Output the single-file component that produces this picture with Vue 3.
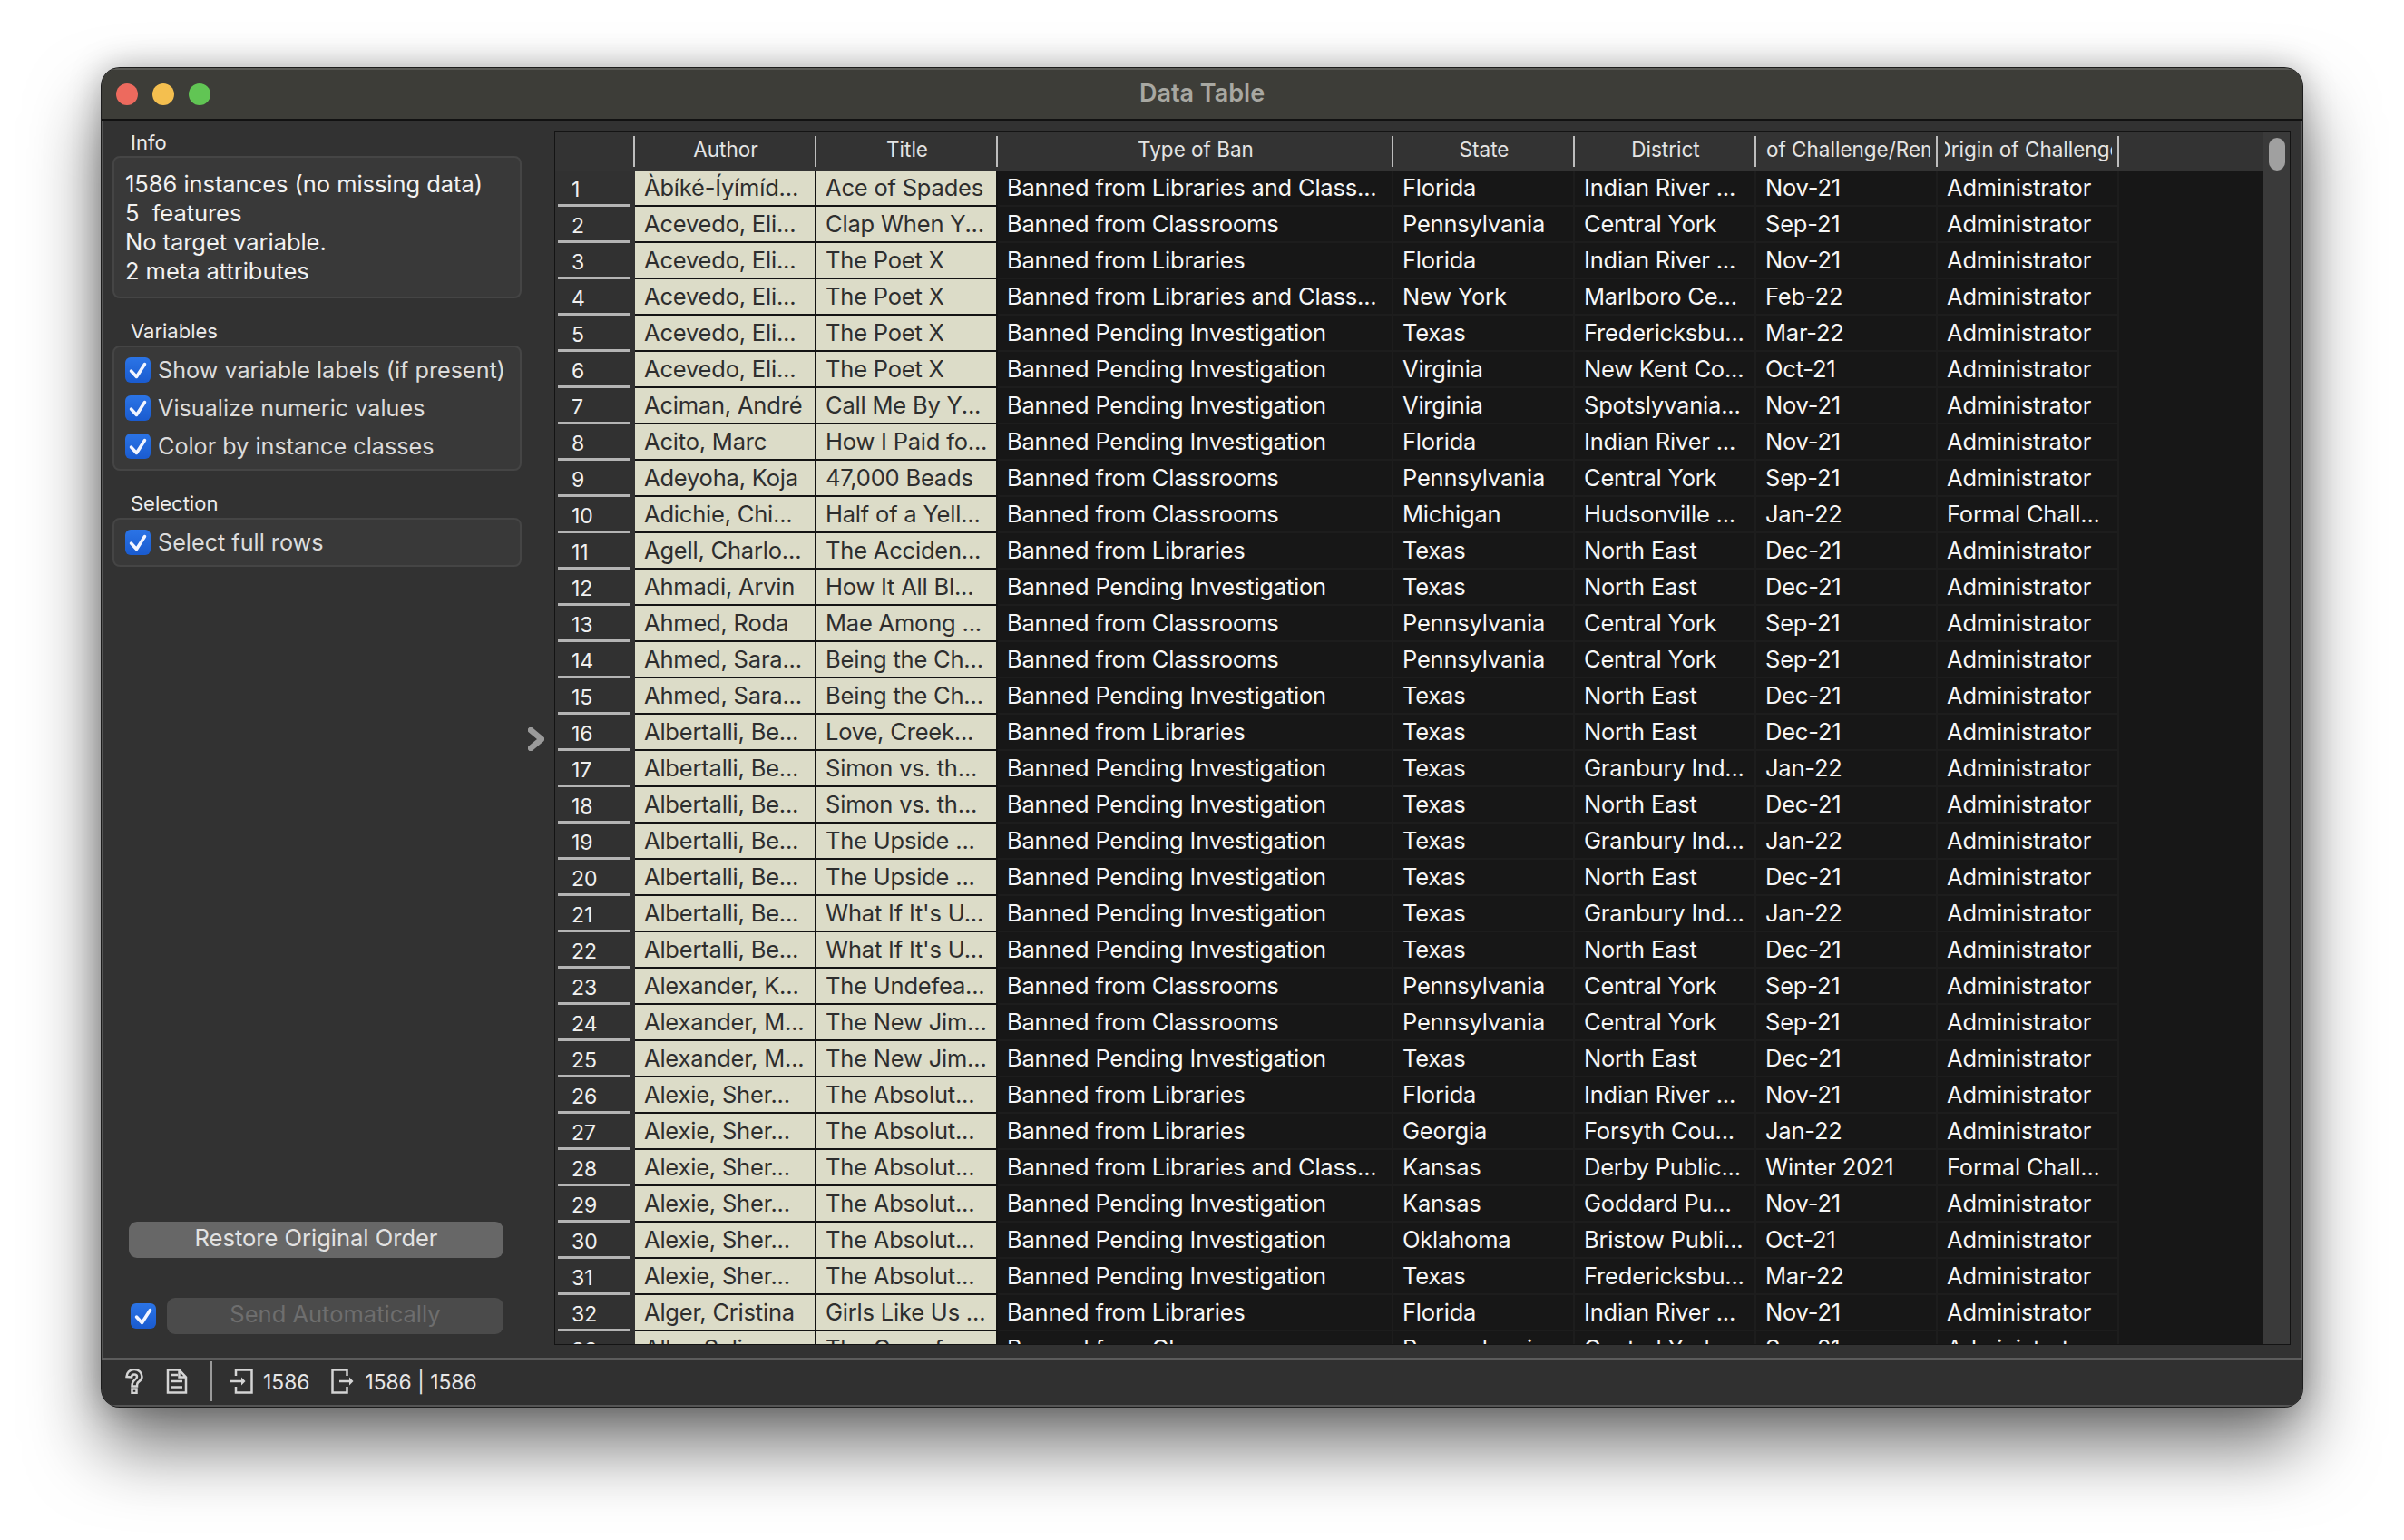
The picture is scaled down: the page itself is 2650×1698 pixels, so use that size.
<script setup>
const L = 'Banned from Libraries'
const LC = 'Banned from Libraries and Class...'
const C = 'Banned from Classrooms'
const P = 'Banned Pending Investigation'
const A = 'Administrator'
const F = 'Formal Chall...'

const columns = ['Author', 'Title', 'Type of Ban', 'State', 'District', 'Date of Challenge/Removal', 'Origin of Challenge']

const rows = [
  ['Àbíké-Íyímíd...', 'Ace of Spades', LC, 'Florida', 'Indian River ...', 'Nov-21', A],
  ['Acevedo, Eli...', 'Clap When Y...', C, 'Pennsylvania', 'Central York', 'Sep-21', A],
  ['Acevedo, Eli...', 'The Poet X', L, 'Florida', 'Indian River ...', 'Nov-21', A],
  ['Acevedo, Eli...', 'The Poet X', LC, 'New York', 'Marlboro Ce...', 'Feb-22', A],
  ['Acevedo, Eli...', 'The Poet X', P, 'Texas', 'Fredericksbu...', 'Mar-22', A],
  ['Acevedo, Eli...', 'The Poet X', P, 'Virginia', 'New Kent Co...', 'Oct-21', A],
  ['Aciman, André', 'Call Me By Y...', P, 'Virginia', 'Spotslyvania...', 'Nov-21', A],
  ['Acito, Marc', 'How I Paid fo...', P, 'Florida', 'Indian River ...', 'Nov-21', A],
  ['Adeyoha, Koja', '47,000 Beads', C, 'Pennsylvania', 'Central York', 'Sep-21', A],
  ['Adichie, Chi...', 'Half of a Yell...', C, 'Michigan', 'Hudsonville ...', 'Jan-22', F],
  ['Agell, Charlo...', 'The Acciden...', L, 'Texas', 'North East', 'Dec-21', A],
  ['Ahmadi, Arvin', 'How It All Bl...', P, 'Texas', 'North East', 'Dec-21', A],
  ['Ahmed, Roda', 'Mae Among ...', C, 'Pennsylvania', 'Central York', 'Sep-21', A],
  ['Ahmed, Sara...', 'Being the Ch...', C, 'Pennsylvania', 'Central York', 'Sep-21', A],
  ['Ahmed, Sara...', 'Being the Ch...', P, 'Texas', 'North East', 'Dec-21', A],
  ['Albertalli, Be...', 'Love, Creek...', L, 'Texas', 'North East', 'Dec-21', A],
  ['Albertalli, Be...', 'Simon vs. th...', P, 'Texas', 'Granbury Ind...', 'Jan-22', A],
  ['Albertalli, Be...', 'Simon vs. th...', P, 'Texas', 'North East', 'Dec-21', A],
  ['Albertalli, Be...', 'The Upside ...', P, 'Texas', 'Granbury Ind...', 'Jan-22', A],
  ['Albertalli, Be...', 'The Upside ...', P, 'Texas', 'North East', 'Dec-21', A],
  ['Albertalli, Be...', "What If It's U...", P, 'Texas', 'Granbury Ind...', 'Jan-22', A],
  ['Albertalli, Be...', "What If It's U...", P, 'Texas', 'North East', 'Dec-21', A],
  ['Alexander, K...', 'The Undefea...', C, 'Pennsylvania', 'Central York', 'Sep-21', A],
  ['Alexander, M...', 'The New Jim...', C, 'Pennsylvania', 'Central York', 'Sep-21', A],
  ['Alexander, M...', 'The New Jim...', P, 'Texas', 'North East', 'Dec-21', A],
  ['Alexie, Sher...', 'The Absolut...', L, 'Florida', 'Indian River ...', 'Nov-21', A],
  ['Alexie, Sher...', 'The Absolut...', L, 'Georgia', 'Forsyth Cou...', 'Jan-22', A],
  ['Alexie, Sher...', 'The Absolut...', LC, 'Kansas', 'Derby Public...', 'Winter 2021', F],
  ['Alexie, Sher...', 'The Absolut...', P, 'Kansas', 'Goddard Pu...', 'Nov-21', A],
  ['Alexie, Sher...', 'The Absolut...', P, 'Oklahoma', 'Bristow Publi...', 'Oct-21', A],
  ['Alexie, Sher...', 'The Absolut...', P, 'Texas', 'Fredericksbu...', 'Mar-22', A],
  ['Alger, Cristina', 'Girls Like Us ...', L, 'Florida', 'Indian River ...', 'Nov-21', A],
  ['Alko, Selina', 'The Case for...', C, 'Pennsylvania', 'Central York', 'Sep-21', A]
]

const variableOptions = ['Show variable labels (if present)', 'Visualize numeric values', 'Color by instance classes']
</script>

<template>
  <div class="page">
    <div class="window">
      <div class="titlebar">
        <span class="light red"></span>
        <span class="light yellow"></span>
        <span class="light green"></span>
        <span class="title">Data Table</span>
      </div>

      <div class="content">
        <aside class="sidebar">
          <div class="group-label">Info</div>
          <div class="box info">
            <div>1586 instances (no missing data)</div>
            <div>5&nbsp; features</div>
            <div>No target variable.</div>
            <div>2 meta attributes</div>
          </div>

          <div class="group-label spaced">Variables</div>
          <div class="box options">
            <label class="option" v-for="o in variableOptions" :key="o">
              <span class="check">
                <svg viewBox="0 0 28 28"><path d="M6.500 15l6 6.500L21.500 7.500" /></svg>
              </span>
              {{ o }}
            </label>
          </div>

          <div class="group-label spaced">Selection</div>
          <div class="box options">
            <label class="option">
              <span class="check">
                <svg viewBox="0 0 28 28"><path d="M6.500 15l6 6.500L21.500 7.500" /></svg>
              </span>
              Select full rows
            </label>
          </div>

          <div class="actions">
            <button class="btn" type="button">Restore Original Order</button>
            <div class="send-row">
              <span class="check">
                <svg viewBox="0 0 28 28"><path d="M6.500 15l6 6.500L21.500 7.500" /></svg>
              </span>
              <button class="btn disabled" type="button">Send Automatically</button>
            </div>
          </div>
        </aside>

        <div class="handle">
          <svg width="18" height="26" viewBox="0 0 18 26"><path d="M3 3l12 10L3 23" /></svg>
        </div>

        <div class="table">
          <div class="table-main">
            <div class="row head">
              <div class="corner"></div>
              <div class="head-cell" v-for="c in columns" :key="c">
                <div class="head-clip"><span>{{ c }}</span></div>
              </div>
            </div>
            <div class="body">
              <div class="row" v-for="(r, i) in rows" :key="i">
                <div class="num"><span>{{ i + 1 }}</span></div>
                <div
                  class="cell"
                  :class="{ meta: j < 2 }"
                  v-for="(v, j) in r"
                  :key="j"
                >{{ v }}</div>
              </div>
            </div>
          </div>
          <div class="scrollbar"><div class="thumb"></div></div>
        </div>
      </div>

      <div class="statusbar">
        <svg class="icon" width="20" height="28" viewBox="0 0 20 28">
          <path d="M1.500 9C1.500 4.500 5 1 10 1s8.500 3.500 8.500 8c0 3.500-3 5-4.500 6.500-.8.8-1 2-1 4H7.500c0-3.500.8-5.500 3-7 1.500-1 2.500-2 2.500-3.500S12 6.500 10 6.500 7 7.500 7 9.500z" />
          <rect x="7.500" y="22.500" width="5" height="4.500" />
        </svg>
        <svg class="icon doc" width="24" height="28" viewBox="0 0 24 28">
          <path d="M2 1.500h12.500l7.500 8v17H2zM14.500 1.500v8H22M6 7h7M6 14h12M6 20.500h12" />
        </svg>
        <span class="sep"></span>
        <svg class="icon" width="26" height="28" viewBox="0 0 26 28">
          <path d="M7 8V1.500h17.500v25H7V20M0 14h14" />
          <path class="solid" d="M13 9.500l4.500 4.500-4.500 4.500z" />
        </svg>
        <span class="count first">1586</span>
        <svg class="icon out" width="26" height="28" viewBox="0 0 26 28">
          <path d="M17.500 8V1.500H1.500v25h16V20M9 14h12" />
          <path class="solid" d="M20 9.500l4.500 4.500-4.500 4.500z" />
        </svg>
        <span class="count">1586 | 1586</span>
      </div>
    </div>
  </div>
</template>

<style scoped>
.page {
  width: 2650px;
  height: 1698px;
  padding: 75px 0 0 112px;
  box-sizing: border-box;
  overflow: hidden;
  background: #fff;
  font-family: Inter, "Liberation Sans", sans-serif;
  font-size: 26px;
}
.window {
  width: 2426px;
  height: 1476px;
  display: flex;
  flex-direction: column;
  background: #323232;
  border-radius: 20px;
  box-shadow: 0 0 0 1px #1c1c1c, inset 0 0 0 2px #555, 0 44px 80px rgba(0, 0, 0, 0.55), 0 0 36px rgba(0, 0, 0, 0.28);
  overflow: hidden;
}

.titlebar {
  position: relative;
  height: 58px;
  flex: none;
  box-sizing: border-box;
  display: flex;
  align-items: center;
  gap: 16px;
  padding-left: 16px;
  background: #3d3d38;
  border-top: 2px solid #5a5a56;
  border-bottom: 2px solid #121212;
}
.light {
  width: 24px;
  height: 24px;
  border-radius: 50%;
}
.red { background: #ed6a5e; }
.yellow { background: #f4bf4f; }
.green { background: #61c554; }
.title {
  position: absolute;
  left: 0;
  right: 0;
  top: 11px;
  line-height: 30px;
  text-align: center;
  color: #a8a8a2;
  font-weight: 600;
  font-size: 27px;
}

.content {
  flex: 1;
  min-height: 0;
  display: flex;
}
.sidebar {
  width: 463px;
  flex: none;
  box-sizing: border-box;
  padding: 10px 0 26px 12px;
  display: flex;
  flex-direction: column;
  color: #e6e6e6;
}
.group-label {
  height: 29px;
  line-height: 28px;
  padding-left: 20px;
  font-size: 22px;
  color: #ececec;
}
.group-label.spaced {
  margin-top: 22px;
  height: 30px;
}
.box {
  background: #393939;
  border: 2px solid #454545;
  border-radius: 8px;
  box-sizing: border-box;
}
.info {
  height: 157px;
  padding: 13px 12px;
  line-height: 32px;
  font-size: 25.5px;
  letter-spacing: -0.05px;
  color: #f2f2f2;
}
.options {
  padding: 11px 12px;
}
.option {
  display: flex;
  align-items: center;
  gap: 8px;
  height: 28px;
  line-height: 30px;
  font-size: 25.2px;
  color: #dcdcdc;
  white-space: nowrap;
}
.option + .option {
  margin-top: 14px;
}
.check {
  width: 28px;
  height: 28px;
  flex: none;
  border-radius: 6px;
  background: linear-gradient(#2b74e6, #1a5bcf);
}
.check svg {
  display: block;
  width: 28px;
  height: 28px;
}
.check path {
  fill: none;
  stroke: #f2f5ff;
  stroke-width: 3.5;
  stroke-linecap: round;
  stroke-linejoin: round;
}
.actions {
  margin-top: auto;
  padding-left: 18px;
  width: 431px;
  box-sizing: border-box;
  display: flex;
  flex-direction: column;
  gap: 44px;
}
.btn {
  height: 40px;
  width: 413px;
  border: 0;
  padding: 0 0 5px;
  border-radius: 9px;
  background: #676767;
  color: #e2e2e2;
  font: inherit;
  font-size: 25.5px;
}
.send-row {
  display: flex;
  align-items: center;
  gap: 12px;
  padding-left: 2px;
}
.btn.disabled {
  width: 371px;
  background: #4b4b4b;
  color: #6e6e6e;
}

.handle {
  width: 36px;
  flex: none;
  display: flex;
  align-items: center;
  justify-content: flex-start;
  padding-left: 7px;
  box-sizing: border-box;
}
.handle path {
  fill: none;
  stroke: #9a9a9a;
  stroke-width: 6.5;
  stroke-linecap: round;
  stroke-linejoin: round;
}

.table {
  flex: 1;
  min-width: 0;
  margin: 11px 13px 14px 0;
  display: flex;
  border: 1px solid #141414;
  background: #171717;
}
.table-main {
  flex: 1;
  min-width: 0;
  display: flex;
  flex-direction: column;
}
.body {
  flex: 1;
  min-height: 0;
  overflow: hidden;
}
.row {
  display: grid;
  grid-template-columns: 88px 200px 200px 436px 200px 200px 200px 200px 1fr;
  height: 40px;
}
.head {
  height: 43px;
  flex: none;
  background: #333;
}
.corner,
.head-cell {
  background: linear-gradient(#bdbdbd, #bdbdbd) right 5px / 2px 34px no-repeat;
}
.head-cell {
  min-width: 0;
  padding: 0 8px 4px 8px;
  box-sizing: border-box;
  display: flex;
}
.head-clip {
  flex: 1;
  min-width: 0;
  display: flex;
  justify-content: center;
  align-items: center;
  overflow: hidden;
  font-size: 22.5px;
  color: #e4e4e4;
  white-space: nowrap;
}
.head-clip span {
  flex: none;
}
.num {
  background: #313131;
  color: #f0f0f0;
  font-size: 23px;
  padding-left: 3px;
}
.num span {
  display: block;
  height: 37px;
  line-height: 42px;
  padding-left: 15px;
  margin-right: 5px;
  overflow: hidden;
  border-bottom: 3px solid #b4b4b4;
}
.cell {
  box-sizing: border-box;
  height: 40px;
  line-height: 38px;
  padding-left: 10px;
  border-right: 2px solid #1d1d1d;
  border-bottom: 2px solid #1d1d1d;
  color: #f6f6f6;
  font-size: 25.5px;
  letter-spacing: -0.2px;
  white-space: nowrap;
  overflow: hidden;
}
.cell.meta {
  background: #dcdcc8;
  color: #2e2e2e;
  border-right-color: #141414;
  border-bottom-color: #141414;
}
.scrollbar {
  width: 29px;
  flex: none;
  background: #3a3a3a;
  box-sizing: border-box;
  padding: 7px 5px 0 6px;
}
.thumb {
  width: 18px;
  height: 36px;
  border-radius: 9px;
  background: #a0a0a0;
}

.statusbar {
  height: 54px;
  flex: none;
  box-sizing: border-box;
  display: flex;
  align-items: center;
  padding: 0 0 2px 26px;
  border-top: 2px solid #5c5c5c;
  border-bottom: 2px solid #555;
  background: #303030;
  color: #e6e6e6;
  font-size: 22.8px;
}
.icon {
  flex: none;
}
.icon path,
.icon rect {
  fill: none;
  stroke: #d4d4d4;
  stroke-width: 2.5;
}
.icon path.solid {
  fill: #d4d4d4;
  stroke: none;
}
.doc {
  margin-left: 25px;
}
.sep {
  width: 2px;
  height: 44px;
  margin: 0 19px 0 25px;
  background: #9a9a9a;
}
.count {
  margin-left: 11px;
}
.count.first {
  margin-right: 24px;
}
</style>
